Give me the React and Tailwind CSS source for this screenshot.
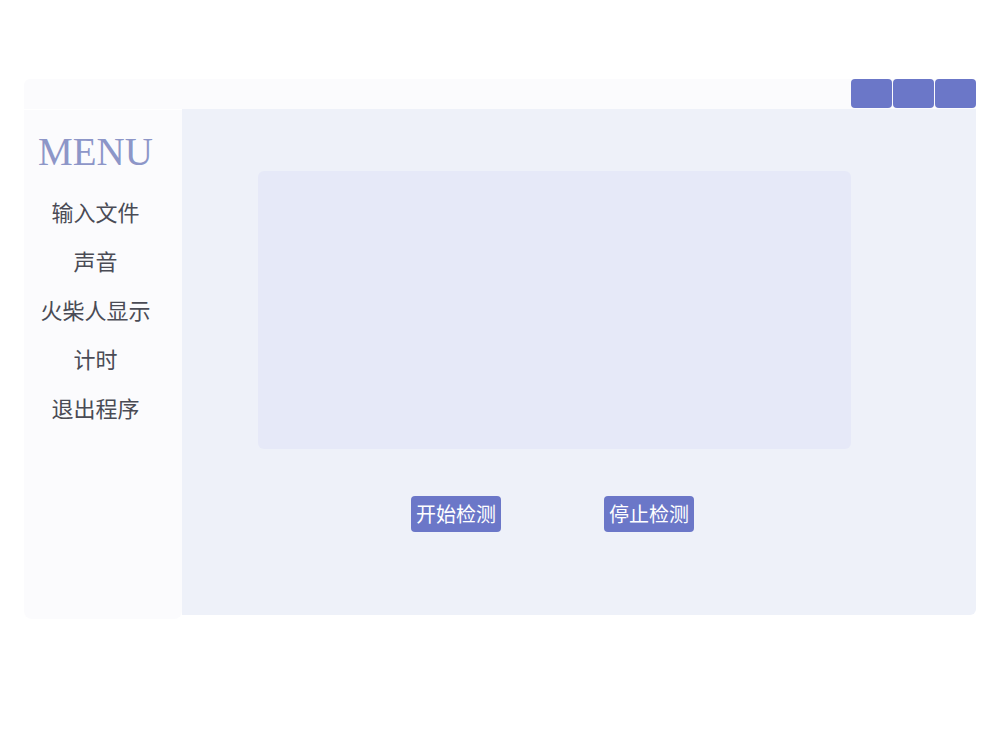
const menuItems = ["输入文件", "声音", "火柴人显示", "计时", "退出程序"];

const cjk = { fontFamily: '"Noto Sans CJK SC", "Noto Sans", sans-serif' };

export default function App() {
  return (
    <div className="min-h-[750px] bg-white px-6 pt-[79px]" style={cjk}>
      <div className="flex h-[30px] justify-end gap-px rounded-t-md bg-[#fbfbfd]">
        {[0, 1, 2].map((i) => (
          <button key={i} className="h-[29px] w-[41px] rounded-[4px] bg-[#6b77c8]" />
        ))}
      </div>

      <div className="flex items-start">
        <aside className="mt-px flex h-[509px] w-[158px] flex-col items-center rounded-b-lg bg-[#fbfbfd] pr-[15px] pt-[18px]">
          <h1
            className="text-[39px] leading-[48px] text-[#8d96c8]"
            style={{ fontFamily: '"Liberation Serif", serif' }}
          >
            MENU
          </h1>
          <ul className="mt-[19px] flex flex-col items-center">
            {menuItems.map((item) => (
              <li key={item} className="h-[49px] text-[22px] leading-[32px] text-[#4a4b55]">
                {item}
              </li>
            ))}
          </ul>
        </aside>

        <main className="flex h-[506px] flex-1 flex-col rounded-br-md bg-[#eef1f9] pl-[76px] pt-[62px]">
          <div className="h-[278px] w-[593px] rounded-md bg-[#e6e9f8]" />
          <div className="mt-[47px] flex gap-[103px] pl-[153px]">
            <button className="h-[36px] w-[90px] rounded bg-[#6b77c8] text-[20px] leading-[36px] text-white">
              开始检测
            </button>
            <button className="h-[36px] w-[90px] rounded bg-[#6b77c8] text-[20px] leading-[36px] text-white">
              停止检测
            </button>
          </div>
        </main>
      </div>
    </div>
  );
}
